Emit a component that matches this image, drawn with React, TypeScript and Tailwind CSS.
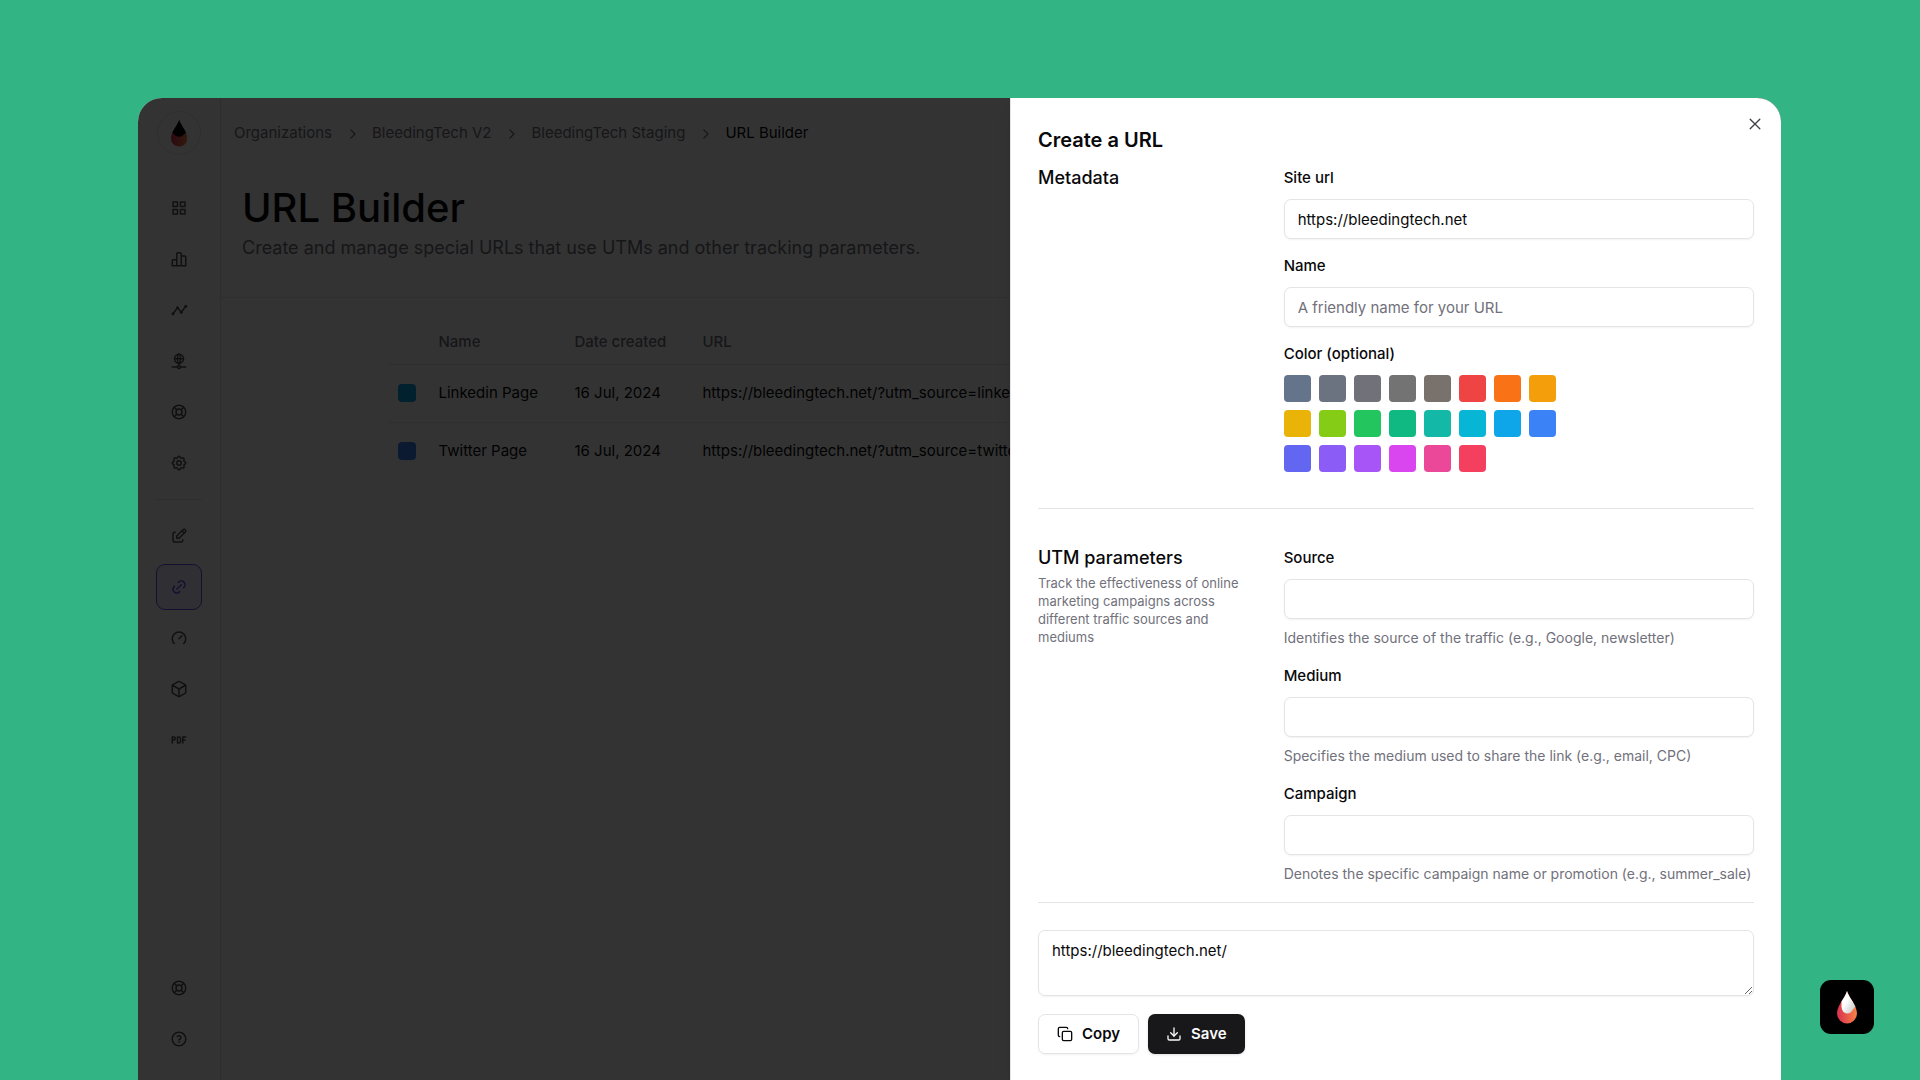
import { useState } from 'react';
import type { ReactNode } from 'react';
import { Box, Copy, Download } from 'lucide-react';
import { RiFunctionLine, RiQuestionLine } from 'react-icons/ri';
import { TbBrandSpeedtest, TbEdit, TbLifebuoy, TbLink, TbNetwork, TbPdf, TbSettings } from 'react-icons/tb';

const swatches = [
  { name: 'slate', bg: 'bg-[#64748b]' },
  { name: 'gray', bg: 'bg-[#6b7280]' },
  { name: 'zinc', bg: 'bg-[#71717a]' },
  { name: 'neutral', bg: 'bg-[#737373]' },
  { name: 'stone', bg: 'bg-[#78716c]' },
  { name: 'red', bg: 'bg-[#ef4444]' },
  { name: 'orange', bg: 'bg-[#f97316]' },
  { name: 'amber', bg: 'bg-[#f59e0b]' },
  { name: 'yellow', bg: 'bg-[#eab308]' },
  { name: 'lime', bg: 'bg-[#84cc16]' },
  { name: 'green', bg: 'bg-[#22c55e]' },
  { name: 'emerald', bg: 'bg-[#10b981]' },
  { name: 'teal', bg: 'bg-[#14b8a6]' },
  { name: 'cyan', bg: 'bg-[#06b6d4]' },
  { name: 'sky', bg: 'bg-[#0ea5e9]' },
  { name: 'blue', bg: 'bg-[#3b82f6]' },
  { name: 'indigo', bg: 'bg-[#6366f1]' },
  { name: 'violet', bg: 'bg-[#8b5cf6]' },
  { name: 'purple', bg: 'bg-[#a855f7]' },
  { name: 'fuchsia', bg: 'bg-[#d946ef]' },
  { name: 'pink', bg: 'bg-[#ec4899]' },
  { name: 'rose', bg: 'bg-[#f43f5e]' },
];

const rows = [
  { name: 'Linkedin Page', date: '16 Jul, 2024', url: 'https://bleedingtech.net/?utm_source=linkedin', bg: 'bg-[#0ea5e9]' },
  { name: 'Twitter Page', date: '16 Jul, 2024', url: 'https://bleedingtech.net/?utm_source=twitter', bg: 'bg-[#3b82f6]' },
];

const utmFields = [
  { id: 'source', label: 'Source', hint: 'Identifies the source of the traffic (e.g., Google, newsletter)' },
  { id: 'medium', label: 'Medium', hint: 'Specifies the medium used to share the link (e.g., email, CPC)' },
  { id: 'campaign', label: 'Campaign', hint: 'Denotes the specific campaign name or promotion (e.g., summer_sale)' },
];

const inputClass =
  'h-10 w-full rounded-[7px] border border-zinc-200 bg-white px-[13px] text-[15px] text-zinc-950 shadow-xs outline-none placeholder:text-zinc-500';

function BarsIcon() {
  return (
    <svg width="18" height="18" viewBox="0 0 24 24" fill="none" stroke="currentColor" strokeWidth="2" strokeLinejoin="round">
      <path d="M3 21h18V9.500a1.500 1.500 0 0 0-1.500-1.500H15V5a1.500 1.500 0 0 0-1.500-1.500h-3A1.500 1.500 0 0 0 9 5v8H4.500A1.500 1.500 0 0 0 3 14.500zM9 13v8M15 8v13" />
    </svg>
  );
}

function TrendIcon() {
  return (
    <svg width="18" height="18" viewBox="0 0 24 24" fill="none" stroke="currentColor" strokeWidth="2">
      <path d="M4 17l6-8 5 6 6-8" />
      <g fill="currentColor" stroke="none">
        <circle cx="4" cy="17" r="2" />
        <circle cx="10" cy="9" r="2" />
        <circle cx="15" cy="15" r="2" />
        <circle cx="21" cy="7" r="2" />
      </g>
    </svg>
  );
}

function ChevronIcon() {
  return (
    <svg width="18" height="18" viewBox="0 0 15 15" fill="none" stroke="currentColor" strokeLinecap="round" strokeLinejoin="round">
      <path d="M6.500 4l3.500 3.500L6.500 11" />
    </svg>
  );
}

function CloseIcon() {
  return (
    <svg width="18" height="18" viewBox="0 0 15 15" fill="none" stroke="currentColor" strokeWidth="1.100" strokeLinecap="round">
      <path d="M3.500 3.500l8 8M11.500 3.500l-8 8" />
    </svg>
  );
}

function DropLogo({ id, dark, className }: { id: string; dark?: boolean; className: string }) {
  return (
    <svg viewBox="0 0 20 33" className={className}>
      <defs>
        <linearGradient id={`${id}-body`} x1="0" y1="0.6" x2="1" y2="0.5">
          <stop offset="0" stopColor="#d8314f" />
          <stop offset="1" stopColor="#f98545" />
        </linearGradient>
        <linearGradient id={`${id}-tip`} x1="0" y1="0" x2="1" y2="1">
          <stop offset="0.4" stopColor="#ffffff" />
          <stop offset="1" stopColor="#bdbdbd" />
        </linearGradient>
      </defs>
      <path d="M10 0C11.500 6 20 14.500 20 22.500A10 10 0 0 1 0 22.500C0 14.500 8.500 6 10 0z" fill={`url(#${id}-body)`} />
      {dark ? (
        <path d="M10 0C11.500 5 16 10 18.500 16C15 17 15 20.500 10 20.500S4 17 1.500 16C4 10 8.500 5 10 0z" fill="#000000" />
      ) : (
        <path d="M10 0C11.500 5 16 10 18.500 16C16 17 15 22.500 10.500 22.500C6 22.500 4.500 18 4.500 15V10.500C6.500 7 9 4 10 0z" fill={`url(#${id}-tip)`} />
      )}
    </svg>
  );
}

function NavButton({ label, active, children }: { label: string; active?: boolean; children: ReactNode }) {
  return (
    <button
      type="button"
      aria-label={label}
      className={`flex size-[46px] shrink-0 items-center justify-center rounded-[9px] border ${
        active ? 'border-[#6d4df2] bg-[#ede9fe] text-[#6d4df2]' : 'border-transparent text-zinc-600'
      }`}
    >
      {children}
    </button>
  );
}

function Sidebar() {
  return (
    <aside className="flex w-[83px] shrink-0 flex-col items-center border-r border-zinc-200 pt-[13px] pb-[18px]">
      <a href="#home" aria-label="Home" className="flex size-11 items-center justify-center rounded-full border border-zinc-200">
        <DropLogo id="nav" dark className="h-[27px]" />
      </a>
      <nav className="mt-[30px] flex flex-col gap-[5px]">
        <NavButton label="Dashboard"><RiFunctionLine size={18} /></NavButton>
        <NavButton label="Reports"><BarsIcon /></NavButton>
        <NavButton label="Trends"><TrendIcon /></NavButton>
        <NavButton label="Domains"><TbNetwork size={18} /></NavButton>
        <NavButton label="Support"><TbLifebuoy size={18} /></NavButton>
        <NavButton label="Settings"><TbSettings size={18} /></NavButton>
      </nav>
      <hr className="my-[13px] w-[46px] border-zinc-200" />
      <nav className="flex flex-col gap-[5px]">
        <NavButton label="Editor"><TbEdit size={18} /></NavButton>
        <NavButton label="URL Builder" active><TbLink size={18} /></NavButton>
        <NavButton label="Speed"><TbBrandSpeedtest size={18} /></NavButton>
        <NavButton label="Packages"><Box size={18} /></NavButton>
        <NavButton label="PDF"><TbPdf size={18} /></NavButton>
      </nav>
      <nav className="mt-auto flex flex-col gap-[5px]">
        <NavButton label="Help center"><TbLifebuoy size={18} /></NavButton>
        <NavButton label="Questions"><RiQuestionLine size={18} /></NavButton>
      </nav>
    </aside>
  );
}

function Breadcrumbs() {
  const crumbs = ['Organizations', 'BleedingTech V2', 'BleedingTech Staging'];
  return (
    <nav aria-label="Breadcrumb" className="flex h-[71px] items-center gap-[11px] px-[13px] text-[15px] text-zinc-500">
      {crumbs.map((crumb) => (
        <div key={crumb} className="flex items-center gap-[11px]">
          <a href="#crumb">{crumb}</a>
          <ChevronIcon />
        </div>
      ))}
      <span className="text-zinc-950">URL Builder</span>
    </nav>
  );
}

function UrlTable() {
  return (
    <table className="mx-auto mt-[22px] w-full max-w-[1225px] table-fixed text-left text-[15px]">
      <thead>
        <tr className="h-[44px] border-b border-zinc-200 text-zinc-500">
          <th className="w-[41px]" />
          <th className="w-[136px] px-[9px] font-medium">Name</th>
          <th className="w-[128px] px-[9px] font-medium">Date created</th>
          <th className="px-[9px] font-medium">URL</th>
        </tr>
      </thead>
      <tbody>
        {rows.map((row) => (
          <tr key={row.name} className="h-[58px] border-b border-zinc-200 last:border-0">
            <td className="px-[9px]">
              <div className={`size-[18px] rounded-[4px] ${row.bg}`} />
            </td>
            <td className="px-[9px] whitespace-nowrap">{row.name}</td>
            <td className="px-[9px] whitespace-nowrap">{row.date}</td>
            <td className="px-[9px] whitespace-nowrap">{row.url}</td>
          </tr>
        ))}
      </tbody>
    </table>
  );
}

function CreateUrlSheet() {
  const [siteUrl, setSiteUrl] = useState('https://bleedingtech.net');

  return (
    <section
      role="dialog"
      aria-label="Create a URL"
      className="relative z-20 ml-auto w-full max-w-[771px] border-l border-zinc-200 bg-white px-[27px] pt-7 pb-6 shadow-lg"
    >
      <button type="button" aria-label="Close" className="absolute top-[17px] right-[17px] text-zinc-700">
        <CloseIcon />
      </button>
      <h2 className="text-[20px] leading-7 font-semibold">Create a URL</h2>

      <div className="mt-3 grid grid-cols-3 gap-[21px]">
        <h3 className="text-[18px] leading-6 font-medium">Metadata</h3>
        <div className="col-span-2 flex flex-col gap-[17px] pt-[2px]">
          <div className="flex flex-col gap-[11px]">
            <label htmlFor="site-url" className="text-[15px] leading-5 font-medium">Site url</label>
            <input id="site-url" value={siteUrl} onChange={(e) => setSiteUrl(e.target.value)} className={inputClass} />
          </div>
          <div className="flex flex-col gap-[11px]">
            <label htmlFor="name" className="text-[15px] leading-5 font-medium">Name</label>
            <input id="name" placeholder="A friendly name for your URL" className={inputClass} />
          </div>
          <fieldset>
            <legend className="mb-[11px] text-[15px] leading-5 font-medium">Color (optional)</legend>
            <div className="flex max-w-[280px] flex-wrap gap-2">
              {swatches.map((swatch) => (
                <button key={swatch.name} type="button" aria-label={swatch.name} className={`size-[27px] rounded-[4px] ${swatch.bg}`} />
              ))}
            </div>
          </fieldset>
        </div>
      </div>

      <hr className="mt-9 mb-[37px] border-zinc-200" />

      <div className="grid grid-cols-3 gap-[21px]">
        <div>
          <h3 className="text-[18px] leading-6 font-medium">UTM parameters</h3>
          <p className="mt-1 text-[13px] leading-[18px] text-zinc-500">
            Track the effectiveness of online marketing campaigns across different traffic sources and mediums
          </p>
        </div>
        <div className="col-span-2 flex flex-col gap-[17px] pt-[2px]">
          {utmFields.map((field) => (
            <div key={field.id}>
              <label htmlFor={field.id} className="mb-[11px] block text-[15px] leading-5 font-medium">{field.label}</label>
              <input id={field.id} aria-describedby={`${field.id}-hint`} className={inputClass} />
              <p id={`${field.id}-hint`} className="mt-2 text-[14px] leading-[22px] whitespace-nowrap text-zinc-500">{field.hint}</p>
            </div>
          ))}
        </div>
      </div>

      <hr className="mt-[17px] mb-[27px] border-zinc-200" />

      <textarea
        aria-label="Generated URL"
        readOnly
        value={`${siteUrl}/`}
        className="block h-[66px] w-full rounded-[7px] border border-zinc-200 px-[13px] py-[9px] text-[15px] leading-[22px] shadow-xs outline-none"
      />
      <div className="mt-[18px] flex gap-[9px]">
        <button type="button" className="flex h-10 items-center gap-[9px] rounded-[7px] border border-zinc-200 px-[18px] text-[15px] font-semibold shadow-xs">
          <Copy size={16} />
          Copy
        </button>
        <button type="button" className="flex h-10 items-center gap-[9px] rounded-[7px] bg-zinc-900 px-[18px] text-[15px] font-semibold text-zinc-50 shadow-sm">
          <Download size={16} />
          Save
        </button>
      </div>
    </section>
  );
}

export default function App() {
  return (
    <div className="flex min-h-screen flex-col bg-[#32b484] pt-[98px] pr-[139px] pl-[138px] font-['Inter',sans-serif] text-zinc-950">
      <div className="relative flex flex-1 overflow-hidden rounded-t-[24px] bg-white">
        {/* Dimmed page behind the sheet */}
        <div className="absolute inset-0 flex">
          <Sidebar />
          <main className="min-w-0 flex-1">
            <Breadcrumbs />
            <header className="border-b border-zinc-200 px-[21px] pt-[17px] pb-[35px]">
              <h1 className="text-[40px] leading-[44px] font-medium">URL Builder</h1>
              <p className="mt-1 text-[18px] leading-7 text-zinc-500">
                Create and manage special URLs that use UTMs and other tracking parameters.
              </p>
            </header>
            <UrlTable />
          </main>
        </div>
        <div className="absolute inset-0 z-10 bg-black/80" />
        <CreateUrlSheet />
      </div>

      <button
        type="button"
        aria-label="Open widget"
        className="fixed right-[46px] bottom-[46px] z-30 flex size-[54px] items-center justify-center rounded-[11px] bg-black"
      >
        <DropLogo id="widget" className="h-[33px]" />
      </button>
    </div>
  );
}
